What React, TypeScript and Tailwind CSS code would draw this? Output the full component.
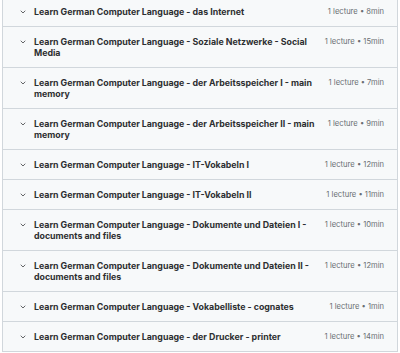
import { ChevronDown } from "lucide-react";

const sections = [
  { title: "Learn German Computer Language - das Internet", meta: "1 lecture • 8min" },
  { title: "Learn German Computer Language - Soziale Netzwerke - Social Media", meta: "1 lecture • 15min" },
  { title: "Learn German Computer Language - der Arbeitsspeicher I - main memory", meta: "1 lecture • 7min" },
  { title: "Learn German Computer Language - der Arbeitsspeicher II - main memory", meta: "1 lecture • 9min" },
  { title: "Learn German Computer Language - IT-Vokabeln I", meta: "1 lecture • 12min" },
  { title: "Learn German Computer Language - IT-Vokabeln II", meta: "1 lecture • 11min" },
  { title: "Learn German Computer Language - Dokumente und Dateien I - documents and files", meta: "1 lecture • 10min" },
  { title: "Learn German Computer Language - Dokumente und Dateien II - documents and files", meta: "1 lecture • 12min" },
  { title: "Learn German Computer Language - Vokabelliste - cognates", meta: "1 lecture • 1min" },
  { title: "Learn German Computer Language - der Drucker - printer", meta: "1 lecture • 14min" },
];

const App = () => {
  return (
    <div
      className="h-[353px] overflow-hidden bg-white"
      style={{ fontFamily: "Inter, 'Liberation Sans', sans-serif" }}
    >
      <div className="-mt-[3px] mx-[2px] border-x border-[#d1d7dc]">
        {sections.map((s) => (
          <div
            key={s.title}
            className="flex items-start bg-[#f7f9fa] border-b border-[#d1d7dc] pl-[16px] pr-[13px] py-[9px]"
          >
            <ChevronDown size={8} strokeWidth={2.2} className="mt-[1.5px] mr-[7px] shrink-0 text-[#2d2f31]" />
            <p className="w-[284px] shrink-0 text-[8.8px] leading-[11px] font-bold text-[#2d2f31]">
              {s.title}
            </p>
            <span className="flex-1 text-right text-[7.6px] leading-[11px] text-[#6a6f73]">{s.meta}</span>
          </div>
        ))}
      </div>
    </div>
  );
};

export default App;
